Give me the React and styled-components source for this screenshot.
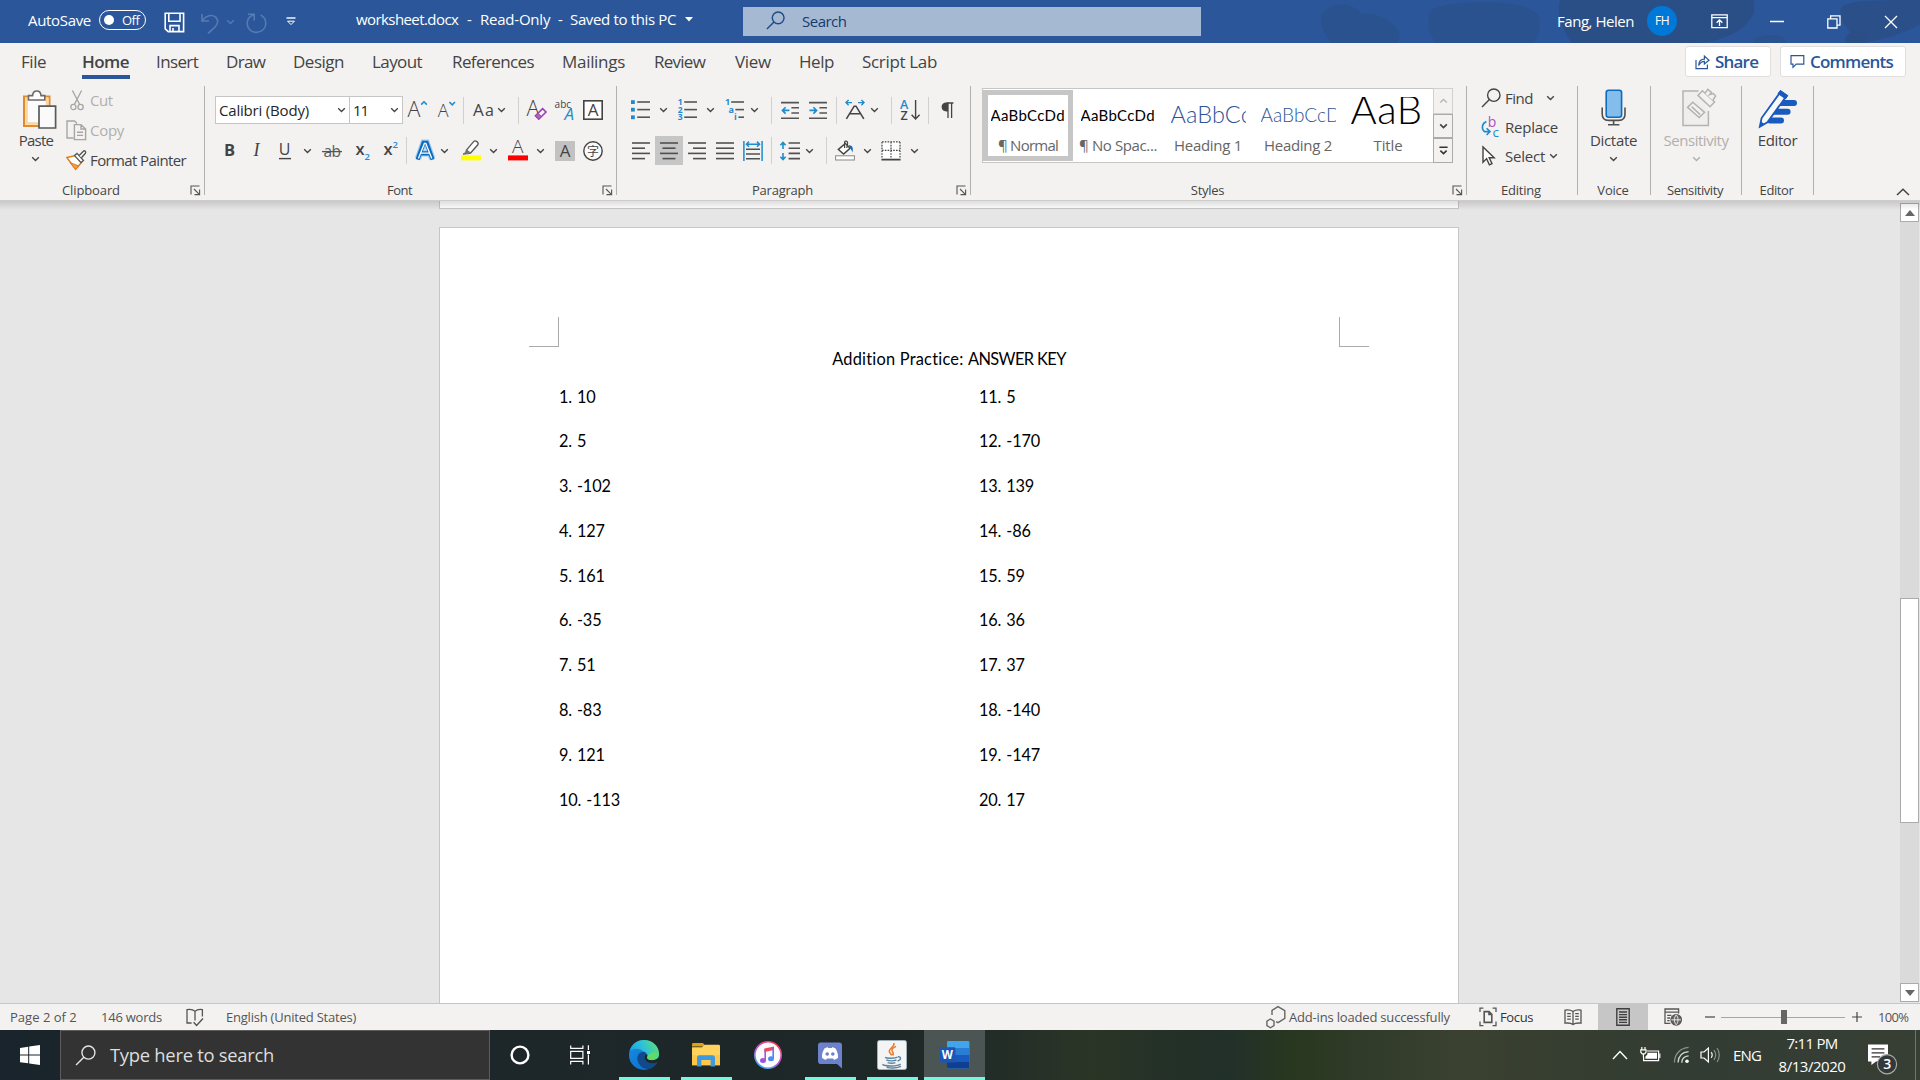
import React from 'react';
import styled, { createGlobalStyle, css } from 'styled-components';

const UI = '"Open Sans", "Noto Sans", "Noto Sans CJK SC", sans-serif';
const BODY = 'Lato, "Open Sans", sans-serif';
const INK = '#444444';
const BLUE = '#1e8bcd';

const Global = createGlobalStyle`
  * { box-sizing: border-box; }
  html, body { margin: 0; padding: 0; overflow: hidden; }
  body { font-family: ${UI}; color: ${INK}; }
  svg { display: block; flex: none; overflow: visible; }
  svg text { font-family: ${UI}; }
`;

const Window = styled.div`
  width: 1920px;
  height: 1080px;
  display: flex;
  flex-direction: column;
  background: #e6e6e6;
  overflow: hidden;
`;

const Item = styled.div`
  flex: none;
  margin-left: ${(p) => p.$ml || 0}px;
  margin-top: ${(p) => p.$mt || 0}px;
  width: ${(p) => (p.$w ? `${p.$w}px` : 'auto')};
`;

const Label = styled.span`
  flex: none;
  display: block;
  white-space: nowrap;
  width: ${(p) => (p.$w ? `${p.$w}px` : 'auto')};
  margin-left: ${(p) => p.$ml || 0}px;
  font-size: ${(p) => p.$size || 15}px;
  line-height: ${(p) => p.$lh || 20}px;
  font-weight: ${(p) => p.$weight || 400};
  letter-spacing: ${(p) => p.$ls ?? -0.35}px;
  color: ${(p) => p.$color || 'inherit'};
`;

/* ---------- title bar ---------- */

const TitleBar = styled.header`
  position: relative;
  height: 43px;
  flex: none;
  display: flex;
  align-items: center;
  background: #2b579a;
  color: #fff;
  > * { position: relative; }
`;

const Backdrop = styled.svg`
  && { position: absolute; top: 0; right: 0; overflow: hidden; }
`;

const AutoSave = styled.div`
  display: flex;
  align-items: center;
  margin: -3px 0 0 28px;
`;

const Toggle = styled.div`
  margin-left: 8px;
  width: 47px;
  height: 20px;
  border: 1.4px solid #fff;
  border-radius: 10px;
  display: flex;
  align-items: center;
  padding-left: 4px;
`;

const Knob = styled.i`
  width: 10px;
  height: 10px;
  border-radius: 50%;
  background: #fff;
`;

const SearchBox = styled.div`
  margin-left: 50px;
  width: 458px;
  height: 29px;
  background: #a6b9d3;
  display: flex;
  align-items: center;
  padding: 0 0 2px 23px;
  color: #163a6e;
`;

const TitleText = styled.div`
  display: flex;
  align-items: center;
  margin-left: 60px;
  margin-top: -5px;
`;

const UserName = styled.div`
  width: 77px;
  margin: -1px 0 0 356px;
`;

const Avatar = styled.div`
  margin-left: 13px;
  margin-top: -1px;
  width: 30px;
  height: 30px;
  border-radius: 50%;
  background: #0078d7;
  display: flex;
  align-items: center;
  justify-content: center;
`;

/* ---------- tabs ---------- */

const TabBar = styled.nav`
  height: 40px;
  flex: none;
  display: flex;
  background: #f3f2f1;
`;

const Tab = styled.div`
  flex: none;
  height: 36px;
  margin-left: ${(p) => p.$ml}px;
  width: ${(p) => p.$w}px;
  padding-top: 7px;
  border-bottom: ${(p) => (p.$active ? '4px solid #2b579a' : '0')};
`;

const ActionButton = styled.div`
  height: 31px;
  margin-top: 3px;
  margin-left: ${(p) => p.$ml}px;
  width: ${(p) => p.$w}px;
  background: #fff;
  border: 1px solid #e1dfdd;
  border-radius: 3px;
  display: flex;
  align-items: center;
  padding-left: 9px;
  color: #2b579a;
`;

/* ---------- ribbon ---------- */

const Ribbon = styled.section`
  height: 118px;
  flex: none;
  display: flex;
  background: #f3f2f1;
  border-bottom: 1px solid #cfcdcb;
`;

const GroupBox = styled.div`
  flex: none;
  width: ${(p) => p.$w}px;
  display: flex;
  flex-direction: column;
`;

const GroupBody = styled.div`
  height: 98px;
  display: flex;
  flex-direction: ${(p) => (p.$column ? 'column' : 'row')};
`;

const GroupFoot = styled.div`
  height: 18px;
  display: flex;
  align-items: center;
  padding-right: ${(p) => (p.$launcher ? 0 : 2)}px;
`;

const GroupName = styled.span`
  flex: 1;
  text-align: center;
  font-size: 13px;
  line-height: 18px;
  letter-spacing: ${(p) => p.$ls ?? -0.22}px;
`;

const Launcher = styled.div`
  width: 22px;
  padding: 1px 0 0 8px;
`;

const Divider = styled.i`
  flex: none;
  width: 1px;
  height: 109px;
  margin-top: 3px;
  background: #b3b0ad;
`;

const ToolRow = styled.div`
  height: ${(p) => p.$h || 29}px;
  margin-top: ${(p) => p.$mt}px;
  display: flex;
  align-items: center;
`;

const Rule = styled.i`
  flex: none;
  width: 1px;
  height: 27px;
  margin-left: ${(p) => p.$ml}px;
  background: #d2d0ce;
`;

const Combo = styled.div`
  flex: none;
  height: 28px;
  margin-left: ${(p) => p.$ml}px;
  width: ${(p) => p.$w}px;
  background: #fff;
  border: 1px solid #c8c6c4;
  display: flex;
  align-items: center;
  justify-content: space-between;
  padding: 0 3px;
  color: #262626;
`;

const Pressed = styled.div`
  flex: none;
  width: 28px;
  height: 29px;
  margin: 0 5px;
  background: #c6c6c6;
  display: flex;
  align-items: center;
  justify-content: center;
`;

const BigButton = styled.div`
  width: ${(p) => p.$w}px;
  display: flex;
  flex-direction: column;
  align-items: center;
  padding-top: 6px;
  color: ${(p) => (p.$off ? '#b1afad' : INK)};
`;

const BigIcon = styled.div`
  height: 41px;
  margin-left: ${(p) => p.$ml || 0}px;
`;

const CommandList = styled.div`
  padding-top: ${(p) => p.$pt}px;
  margin-left: ${(p) => p.$ml || 0}px;
`;

const Command = styled.div`
  height: ${(p) => p.$h}px;
  display: flex;
  align-items: center;
  color: ${(p) => (p.$off ? '#b1afad' : INK)};
`;

const CommandIcon = styled.div`
  width: 24px;
`;

const Gallery = styled.div`
  margin: 5px 0 0 11px;
  width: 471px;
  height: 75px;
  display: flex;
  background: #fff;
  border: 1px solid #c8c6c4;
  border-right: 0;
`;

const StyleCell = styled.div`
  flex: none;
  width: 90px;
  margin: 1px 0 1px;
  display: flex;
  flex-direction: column;
  align-items: center;
  ${(p) => p.$selected && css`box-shadow: inset 0 0 0 5px #c6c6c6;`}
`;

const Sample = styled.div`
  margin-top: 7px;
  width: 75px;
  height: 32px;
  overflow: hidden;
  white-space: nowrap;
  font-family: ${BODY};
  font-size: ${(p) => p.$size}px;
  line-height: ${(p) => p.$lh}px;
  font-weight: ${(p) => p.$weight || 400};
  letter-spacing: ${(p) => p.$ls || 0}px;
  color: ${(p) => p.$color || '#000'};
`;

const StyleName = styled.div`
  margin-top: 6px;
  font-size: 15px;
  line-height: 20px;
  letter-spacing: ${(p) => p.$ls}px;
  color: #666;
  white-space: nowrap;
`;

const GalleryArrows = styled.div`
  width: 20px;
  margin: -1px 0 -1px auto;
  display: grid;
  grid-template-rows: 26px 24px 25px;
`;

const GalleryArrow = styled.div`
  border: 1px solid ${(p) => (p.$off ? '#d2d0ce' : '#ababab')};
  background: #f3f2f1;
  display: flex;
  align-items: center;
  justify-content: center;
`;

/* ---------- document ---------- */

const Workspace = styled.main`
  position: relative;
  height: 802px;
  flex: none;
  display: flex;
  background: #e6e6e6;
  overflow: hidden;
`;

const RibbonShadow = styled.div`
  position: absolute;
  left: 0;
  right: 0;
  top: 0;
  height: 9px;
  background: linear-gradient(rgba(0, 0, 0, 0.13), rgba(0, 0, 0, 0));
`;

const Pages = styled.div`
  margin-left: 439px;
  width: 1020px;
`;

const PageEnd = styled.div`
  height: 8px;
  background: #fff;
  border: 1px solid #c6c6c6;
  border-top: 0;
`;

const Page = styled.article`
  margin-top: 18px;
  height: 900px;
  background: #fff;
  border: 1px solid #c6c6c6;
  color: #000;
  font-family: ${BODY};
`;

const CropRow = styled.div`
  display: flex;
  justify-content: space-between;
  padding: 89px 89px 0 89px;
`;

const Crop = styled.i`
  width: 30px;
  height: 30px;
  border-bottom: 1px solid #ababab;
  ${(p) => (p.$left ? 'border-right' : 'border-left')}: 1px solid #ababab;
`;

const Heading = styled.h1`
  margin: 0;
  padding-top: 2px;
  text-align: center;
  font-size: 16.4px;
  line-height: 20px;
  font-weight: 400;
  letter-spacing: 0.22px;
`;

const Caps = styled.span`
  letter-spacing: -0.6px;
`;

const Answers = styled.div`
  display: grid;
  grid-template-columns: 420px 1fr;
  grid-template-rows: repeat(10, 44.8px);
  grid-auto-flow: column;
  margin: 5.5px 0 0 119px;
`;

const Answer = styled.p`
  margin: 0;
  font-size: 16.3px;
  line-height: 44.8px;
  letter-spacing: -0.16px;
  word-spacing: 1px;
`;

const Scrollbar = styled.div`
  margin-left: auto;
  width: 20px;
  display: flex;
  flex-direction: column;
  padding: 2px 1px 1px 0;
`;

const ScrollButton = styled.div`
  height: 19px;
  flex: none;
  background: #fff;
  border: 1px solid #ababab;
  display: flex;
  align-items: center;
  justify-content: center;
`;

const ScrollTrack = styled.div`
  flex: 1;
  background: #dadada;
  padding-top: 376px;
`;

const ScrollThumb = styled.div`
  height: 225px;
  background: #fff;
  border: 1px solid #ababab;
`;

/* ---------- status bar ---------- */

const StatusBar = styled.footer`
  height: 27px;
  flex: none;
  display: flex;
  align-items: center;
  background: #f3f2f1;
  border-top: 1px solid #c6c6c6;
  color: #555;
`;

const ViewButton = styled.div`
  margin-left: 16px;
  width: 50px;
  height: 26px;
  background: #c6c6c6;
  display: flex;
  align-items: center;
  justify-content: center;
`;

const ZoomTrack = styled.div`
  margin-left: 6px;
  width: 124px;
  height: 14px;
  padding-left: 2px;
  display: flex;
  justify-content: center;
  background: linear-gradient(#a6a6a6, #a6a6a6) center / 100% 1px no-repeat;
`;

const ZoomThumb = styled.i`
  width: 6px;
  height: 14px;
  background: #666;
`;

/* ---------- taskbar ---------- */

const Taskbar = styled.div`
  height: 50px;
  flex: none;
  display: flex;
  align-items: center;
  color: #fff;
  background: linear-gradient(90deg, #19242c 0, #1d2629 500px, #1f2827 900px, #232d28 1000px, #2b3526 1090px, #233028 1180px, #22302a 1230px, #28371f 1290px, #323c2b 1380px, #3a4130 1460px, #363e31 1560px, #333c33 1700px, #373f35 1920px);
`;

const TaskSlot = styled.div`
  position: relative;
  width: ${(p) => p.$w || 62}px;
  margin-left: ${(p) => p.$ml || 0}px;
  height: 50px;
  display: flex;
  align-items: center;
  justify-content: center;
  background: ${(p) => (p.$active ? '#4b5554' : 'transparent')};
  &::after {
    content: '';
    display: ${(p) => (p.$line ? 'block' : 'none')};
    position: absolute;
    bottom: 0;
    width: ${(p) => p.$line}px;
    height: 3px;
    background: #76f7dc;
  }
`;

const TaskSearch = styled.div`
  width: 430px;
  height: 50px;
  background: #333;
  border: 1px solid #5c5c5c;
  display: flex;
  align-items: center;
  padding-left: 14px;
  color: #dedede;
`;

const Clock = styled.div`
  width: 70px;
  margin-left: 13px;
  margin-top: -2px;
  text-align: center;
  display: flex;
  flex-direction: column;
  align-items: center;
  gap: 3px;
`;

const DesktopEdge = styled.i`
  width: 1px;
  height: 50px;
  margin-left: 17px;
  background: #6f756c;
`;

/* ---------- drawings ---------- */

const Svg = ({ w, h, children, vb, ...rest }) => (
  <svg width={w} height={h} viewBox={vb || `0 0 ${w} ${h}`} fill="none" {...rest}>{children}</svg>
);

const Chevron = ({ up, color = INK, w = 9, sw = 1.4 }) => (
  <Svg w={w} h={6} vb="0 0 9 6"><path d={up ? 'M1.2 4.6 4.5 1.4 7.8 4.6' : 'M1.2 1.3 4.5 4.5 7.8 1.3'} stroke={color} strokeWidth={sw} /></Svg>
);

const Chev = ({ ml }) => <Item $ml={ml} $w={9}><Chevron /></Item>;

const Lens = ({ w = 20, color, sw = 1.5 }) => (
  <Svg w={w} h={w} vb="0 0 20 20" stroke={color} strokeWidth={sw}><circle cx="12.8" cy="7.2" r="6.2" /><path d="M8.4 11.6 1 19" /></Svg>
);

const Glyph = ({ x, y, s, c = INK, wt = 400, children, ...r }) => (
  <text x={x} y={y} fontSize={s} fill={c} fontWeight={wt} {...r}>{children}</text>
);

const Lines = ({ rows, w = 18, h = 20, color = '#505050' }) => (
  <Svg w={w} h={h} stroke={color} strokeWidth="1.6">
    {rows.map(([y, a, b], i) => <path key={i} d={`M${a} ${y}H${b}`} />)}
  </Svg>
);

const LauncherIcon = () => (
  <Svg w={11} h={11} stroke="#555" strokeWidth="1.1"><path d="M1 9.5V1H9.5M4 4 9.3 9.3M9.6 4.5V9.6H4.5" /></Svg>
);

const SaveIcon = () => (
  <Svg w={21} h={21} stroke="#fff" strokeWidth="1.6"><path d="M1.2 1.2H19.6V19.6H4.2L1.2 16.8ZM4.8 1.2V9.2H16V1.2M6 19.6V13.6H15V19.6M9 16V19.6" /></Svg>
);
const UndoIcon = () => (
  <Svg w={18} h={22} stroke="#557ab4" strokeWidth="1.6"><path d="M1 2V9H8M1.2 8.6C5 3.6 11 2 14.6 5.2 18.4 8.8 16.4 12.6 13.4 15.6L7 21.4" /></Svg>
);
const RedoIcon = () => (
  <Svg w={21} h={22} stroke="#557ab4" strokeWidth="1.6"><path d="M2 2.2H8.2V8.4M7.8 2.8C3 4.6 1 8.2 1.2 12 1.6 17 5.6 20.4 10.4 20.4 15.6 20.4 19.8 16.4 19.8 11.4 19.8 7.6 17.8 4.6 14.6 3" /></Svg>
);
const CustomizeIcon = () => (
  <Svg w={10} h={10} stroke="#fff" strokeWidth="1.4"><path d="M.5 1H9.5" /><path d="M1.6 4.2H8.4L5 7.6Z" strokeWidth="1" /></Svg>
);
const RibbonIcon = () => (
  <Svg w={17} h={15} stroke="#fff" strokeWidth="1.3"><path d="M.8 .8H16.2V13.6H.8ZM.8 3.6H16.2M8.5 12V6.2M5.6 8.8 8.5 5.9 11.4 8.8" /></Svg>
);
const RestoreIcon = () => (
  <Svg w={14} h={14} stroke="#fff" strokeWidth="1.3"><path d="M.8 3.8H10V13H.8ZM3.6 3.6V.8H13V10.2H10.2" /></Svg>
);
const CloseIcon = () => (
  <Svg w={14} h={14} stroke="#fff" strokeWidth="1.3"><path d="M1 1 13 13M13 1 1 13" /></Svg>
);
const ShareIcon = () => (
  <Svg w={15} h={16} stroke="#2b579a" strokeWidth="1.2"><path d="M1 6V14.6H12.4V10.4M3.6 11.6C3.8 7.4 6 5.2 9.4 5.2V2L14 6.2 9.4 10V7.4C7 7.4 5 8.8 3.6 11.6Z" /></Svg>
);
const CommentIcon = () => (
  <Svg w={15} h={15} stroke="#2b579a" strokeWidth="1.2"><path d="M1 1.6H13.8V10.2H6.2L3 13.4V10.2H1Z" /></Svg>
);

const PasteIcon = () => (
  <Svg w={35} h={39}>
    <path d="M2 6.5H27.5V36H2Z" fill="#fbfbfb" stroke="#e58a2a" strokeWidth="2" />
    <path d="M4.5 9H25V33.5H4.5Z" stroke="#fbd69c" strokeWidth="2.6" />
    <path d="M6.5 10V5.6H10.6C10.8 2.6 12.4 1 14.8 1 17.2 1 18.8 2.6 19 5.6H22.8V10Z" fill="#fff" stroke="#6b6b6b" strokeWidth="1.6" />
    <path d="M17 16.2H33.6V38H17Z" fill="#fafafa" stroke="#5a5a5a" strokeWidth="1.7" />
  </Svg>
);
const CutIcon = () => (
  <Svg w={14} h={21} stroke="#a7a5a3" strokeWidth="1.3"><path d="M2.4 .5 9.6 14.4M11.6 .5 4.4 14.4" /><circle cx="3.4" cy="17" r="2.6" /><circle cx="10.6" cy="17" r="2.6" /></Svg>
);
const CopyIcon = () => (
  <Svg w={21} h={21} stroke="#a7a5a3" strokeWidth="1.4"><path d="M7.6 18H1V1H8.6L11 3.4" /><path d="M8.4 4.6H15L19.6 9V19.6H8.4ZM15 4.6V9H19.6M11 12.2H17M11 15.4H17" /></Svg>
);
const PainterIcon = () => (
  <Svg w={21} h={21}>
    <path d="M1 7.6 9.4 5.6 15.4 12.4 9.6 19.4Z" fill="#fff" stroke="#e07b1b" strokeWidth="1.5" />
    <path d="M4 12.6 12.4 15.8 9.6 19.4Z" fill="#f0a050" stroke="#e07b1b" strokeWidth="1" />
    <path d="M8.6 5.6 11 3.4 17.4 10.4 15 12.6Z" fill="#fff" stroke="#555" strokeWidth="1.4" />
    <path d="M13.2 5.6 17.4 1.2C18.6 .2 20.4 1.8 19.4 3.2L15.4 7.8" fill="#fff" stroke="#555" strokeWidth="1.4" />
  </Svg>
);

const GrowIcon = () => (<Svg w={20} h={24}><Glyph x="-.4" y="19" s="21.5" wt={350}>A</Glyph><path d="M13.2 6.6 16 3.8 18.8 6.6" stroke={BLUE} strokeWidth="1.6" /></Svg>);
const ShrinkIcon = () => (<Svg w={18} h={24}><Glyph x="-.2" y="19" s="18" wt={350}>A</Glyph><path d="M11.4 4 14.2 6.8 17 4" stroke={BLUE} strokeWidth="1.6" /></Svg>);
const CaseIcon = () => (<Svg w={22} h={24}><Glyph x="0" y="18" s="17" wt={400}>A</Glyph><Glyph x="12" y="18" s="16" wt={400}>a</Glyph></Svg>);
const ClearIcon = () => (
  <Svg w={20} h={22}><Glyph x="-.4" y="17" s="21.5" wt={350}>A</Glyph><path d="M8.4 16.8 15.6 9.6 19 13 11.8 20.2Z" fill="#f7ecfa" stroke="#9a3fae" strokeWidth="1.6" /><path d="M8.4 16.8 11 14.2 14.4 17.6 11.8 20.2Z" fill="#b45fc4" stroke="#9a3fae" /></Svg>
);
const PhoneticIcon = () => (<Svg w={21} h={24}><Glyph x="-.4" y="10" s="10">abc</Glyph><Glyph x="9.6" y="21.6" s="17" c={BLUE} fontStyle="italic">A</Glyph></Svg>);
const BoxedA = () => (<Svg w={20} h={20}><rect x=".8" y=".8" width="18.4" height="18.4" fill="#fff" stroke="#444" strokeWidth="1.6" /><Glyph x="4.8" y="16" s="17">A</Glyph></Svg>);
const StrikeIcon = () => (<Svg w={20} h={20}><Glyph x="1.4" y="15.6" s="15.5" c="#5c5c5c" letterSpacing="-.4">ab</Glyph><path d="M0 10.6H20" stroke="#555" strokeWidth="1.3" /></Svg>);
const SubIcon = () => (<Svg w={15} h={24}><Glyph x="-.4" y="16" s="16.5" wt={600}>x</Glyph><Glyph x="8.6" y="21.4" s="9.5" wt={600} c={BLUE}>2</Glyph></Svg>);
const SupIcon = () => (<Svg w={15} h={24}><Glyph x="-.4" y="16" s="16.5" wt={600}>x</Glyph><Glyph x="8.6" y="8.6" s="9.5" wt={600} c={BLUE}>2</Glyph></Svg>);
const EffectsIcon = () => (
  <Svg w={20} h={22} strokeLinejoin="miter">
    <path d="M3 18.6 8.6 2.8H11.6L17.2 18.6M6 13.4H14.2" stroke="#9ccbf0" strokeWidth="6.4" />
    <path d="M2.6 19.6 8.6 2.8H11.6L17.6 19.6M6 13.4H14.2" stroke="#0f6cbd" strokeWidth="4.2" />
    <path d="M3.4 18.4 9.4 3.4H10.8L16.8 18.4M6 13.2H14.2" stroke="#fff" strokeWidth="1.3" />
  </Svg>
);
const HighlightIcon = () => (
  <Svg w={20} h={21}><path d="M5.2 10.4 12.6 1.6C14.4 -.2 18.2 2.4 16.8 4.8L9.6 13" fill="#fff" stroke="#555" strokeWidth="1.3" /><path d="M5.4 9.8 10 13.2 6.6 13.8 2 14.2 4.6 12.4Z" fill="#777" stroke="#666" /><path d="M0 15.4H20V20.4H0Z" fill="#ffff00" /></Svg>
);
const FontColorIcon = () => (<Svg w={20} h={21}><Glyph x="4" y="13" s="19" wt={350}>A</Glyph><path d="M0 15.4H20V20.4H0Z" fill="#ff0000" /></Svg>);
const ShadeIcon = () => (<Svg w={20} h={20}><path d="M0 0H20V20H0Z" fill="#c2c2c2" /><Glyph x="4.8" y="16" s="17">A</Glyph></Svg>);
const EncloseIcon = () => (
  <Svg w={20} h={20}><circle cx="10" cy="10" r="9.2" fill="#fafafa" stroke="#444" strokeWidth="1.4" /><text x="4" y="14.6" fontSize="12" fill="#444" style={{ fontFamily: '"Noto Sans CJK SC", sans-serif' }}>字</text></Svg>
);

const BulletsIcon = () => (
  <Svg w={19} h={20}>{[2, 9.6, 17.2].map((y) => <g key={y}><rect x="0" y={y - 1.8} width="3.8" height="3.8" fill={BLUE} /><path d={`M6.2 ${y}H19`} stroke="#555" strokeWidth="1.6" /></g>)}</Svg>
);
const NumbersIcon = () => (
  <Svg w={19} h={22}>{[[3, '1'], [10.6, '2'], [18.2, '3']].map(([y, n]) => <g key={n}><Glyph x="-.2" y={y + 3} s="8.5" wt={700} c={BLUE}>{n}</Glyph><path d={`M6.2 ${y}H19`} stroke="#555" strokeWidth="1.6" /></g>)}</Svg>
);
const MultiIcon = () => (
  <Svg w={19} h={22}>{[[3, '1', 0, 6.2], [10.6, 'a', 3.4, 10.4], [18.2, 'i', 9, 13.4]].map(([y, n, x, from]) => <g key={n}><Glyph x={x} y={y + 3} s="9" wt={700} c={BLUE}>{n}</Glyph><path d={`M${from} ${y}H19`} stroke="#555" strokeWidth="1.6" /></g>)}</Svg>
);
const IndentIcon = ({ out }) => (
  <Svg w={18} h={19} strokeWidth="1.6"><path d="M0 1.6H18M10.4 6.8H18M10.4 12H18M0 17.2H18" stroke="#555" /><path d={out ? 'M8.4 9.4H1.6M4.6 6.2 1.4 9.4 4.6 12.6' : 'M.4 9.4H7.2M4.4 6.2 7.6 9.4 4.4 12.6'} stroke={BLUE} /></Svg>
);
const AsianIcon = () => (
  <Svg w={20} h={22}><path d="M7 3.6H1M3.6 1 1 3.6 3.6 6.2M13 3.6H19M16.4 1 19 3.6 16.4 6.2" stroke={BLUE} strokeWidth="1.4" /><path d="M1.4 19.8 9.2 7.2H11L18.8 19.8M4.6 14.8H15.6" stroke="#444" strokeWidth="1.6" /></Svg>
);
const SortIcon = () => (
  <Svg w={20} h={22}><Glyph x="0" y="10" s="12.5" wt={600} c={BLUE}>A</Glyph><Glyph x=".4" y="21" s="12.5" wt={600}>Z</Glyph><path d="M15.6 1V20M11.6 15.8 15.6 20 19.6 15.8" stroke="#444" strokeWidth="1.4" /></Svg>
);
const PilcrowIcon = () => (
  <Svg w={13} h={17}><path d="M5.6 1H12.4M7 1V16M10.6 1V16" stroke="#444" strokeWidth="1.3" /><path d="M7 .6V9.4H5.4C2.4 9.4 .6 7.6 .6 5 .6 2.4 2.4 .6 5.4 .6Z" fill="#444" /></Svg>
);
const DistributeIcon = () => (
  <Svg w={20} h={20}><path d="M.9 0V20M19.1 0V20M3.6 3.2H16.4M6 .6 3.4 3.2 6 5.8M14 .6 16.6 3.2 14 5.8" stroke={BLUE} strokeWidth="1.5" /><path d="M3 8.2H17M3 13H17M3 17.8H17" stroke="#505050" strokeWidth="1.6" /></Svg>
);
const SpacingIcon = () => (
  <Svg w={20} h={20}><path d="M3 1.6V8M.4 4.2 3 1.4 5.6 4.2M3 12V18.4M.4 15.8 3 18.6 5.6 15.8" stroke={BLUE} strokeWidth="1.6" /><path d="M8.6 2H20M8.6 7.2H20M8.6 12.4H20M8.6 17.6H20" stroke="#505050" strokeWidth="1.6" /></Svg>
);
const BucketIcon = () => (
  <Svg w={20} h={21}><path d="M3.4 9.4 10.4 3.4 15 8.4 8.6 14Z" fill="#fff" stroke="#444" strokeWidth="1.4" /><path d="M9.6 8V2.4C9.6 .4 13 .6 12.6 3.4L11.8 8" stroke="#444" strokeWidth="1.2" /><path d="M13.4 5.4C17.6 5 18.4 8 17.6 12.4L15.6 8.6Z" fill="#0f6cbd" /><rect x=".6" y="15.8" width="18.8" height="4.2" fill="#fff" stroke="#888" /></Svg>
);
const BordersIcon = () => (
  <Svg w={20} h={20}><path d="M1 .8H19V18H1Z" fill="#fff" /><path d="M1 .8H19M1 9.4H19M1 1V17.6M10 1V17.6M19 1V17.6" stroke="#444" strokeWidth="1.2" strokeDasharray="1.6 1.2" /><path d="M.4 18.6H19.6" stroke="#444" strokeWidth="1.8" /></Svg>
);

const ReplaceIcon = () => (
  <Svg w={19} h={22}><Glyph x="6.8" y="10.6" s="14" c="#b04fc0">b</Glyph><Glyph x="11.6" y="20.6" s="13.5" c={BLUE}>c</Glyph><path d="M5.4 5.6C1 7.6 0 12.4 3.4 15.6H8.6M5.6 12.2 9 15.6 5.6 19" stroke={BLUE} strokeWidth="1.6" /></Svg>
);
const PointerIcon = () => (
  <Svg w={15} h={20}><path d="M2 1V16.2L5.6 12.6 8.4 18.8 11 17.6 8.2 11.8H13.2Z" fill="#fff" stroke="#444" strokeWidth="1.4" /></Svg>
);
const MicIcon = () => (
  <Svg w={25} h={37}><rect x="5.2" y="1.2" width="15.4" height="27" rx="2.4" fill="#83bdeb" stroke="#0f6cbd" strokeWidth="1.6" /><path d="M1.2 18.6V25C1.2 29.6 3.6 31.4 7.4 31.4H17.8C21.6 31.4 24 29.6 24 25V18.6M12.6 31.4V35.6M7 35.8H18.4" stroke="#505050" strokeWidth="1.6" /></Svg>
);
const SensitivityIcon = () => (
  <Svg w={36} h={39} stroke="#b5b3b1" strokeWidth="1.5"><path d="M17.6 2H2V36.6H27.4V22" fill="#efeeed" /><path d="M6.6 18.4 11.8 13.2 23.6 23.4 18.2 28.6ZM10.6 17.6 19.2 25.6" fill="#f3f2f1" /><path d="M17 6.4 21.4 1.8 33.6 13 29 17.8Z" fill="#f3f2f1" /><path d="M24 4.2 26.8 .4 30.4 3.4 28.6 5.6 32.4 4.6 34.6 7 31.8 11.4" fill="#f3f2f1" /></Svg>
);
const EditorIcon = () => (
  <Svg w={40} h={40}>
    <path d="M22 14H36M16 22.8H29.6M12 31.4H23" stroke="#185abd" strokeWidth="6" strokeLinecap="round" />
    <path d="M22.6 2.8 28.4 7 9.4 33.4 1.8 37.8 3.6 29Z" fill="#f8f8f8" stroke="#185abd" strokeWidth="1.8" />
    <path d="M22.4 1.4 29.8 6.6 27.6 9.8 20 4.6Z" fill="#185abd" stroke="#185abd" strokeLinejoin="round" />
    <path d="M1.4 38.4 3 32.4 6.8 35.2Z" fill="#185abd" />
  </Svg>
);

const ProofIcon = () => (
  <Svg w={18} h={19} stroke="#555" strokeWidth="1.3"><path d="M9 3.4C7 1.4 3.6 1.2 1 1.6V15H5.6M9 3.4C11 1.4 14 1.2 16.4 1.6V8.6M9 3.4V12.6" /><path d="M7.6 14.2 10.6 17.4 17 10.6" strokeWidth="1.5" /></Svg>
);
const AddinIcon = () => (
  <Svg w={20} h={24} stroke="#666" strokeWidth="1.4"><path d="M6 10V5.4L12 1.6 18.8 5.6V13.4L12 17.6 10 16.6" /><path d="M4.4 14 8 16.2V20.6L4.4 22.8 .9 20.6V16.2Z" /></Svg>
);
const FocusIcon = () => (
  <Svg w={18} h={20} stroke="#555" strokeWidth="1.3"><path d="M4.4 1.2H1V5M1 14.6V18.6H4.4M13.6 1.2H17V5M17 14.6V18.6H13.6" /><path d="M5.2 4.6H10L12.8 7.4V15.4H5.2ZM10 4.6V7.4H12.8" strokeWidth="1.6" /></Svg>
);
const ReadIcon = () => (
  <Svg w={18} h={17} stroke="#555" strokeWidth="1.3"><path d="M9 2.6C6.6 .8 3.4 .8 1 1.2V14.2C3.6 13.8 6.6 13.8 9 15.6 11.4 13.8 14.4 13.8 17 14.2V1.2C14.6 .8 11.4 .8 9 2.6ZM9 2.6V15.6M3.2 4.6H6.8M3.2 7.4H6.8M3.2 10.2H6.8M11.2 4.6H14.8M11.2 7.4H14.8M11.2 10.2H14.8" /></Svg>
);
const PrintIcon = () => (
  <Svg w={14} h={18} stroke="#3f3f3f" strokeWidth="1.4"><path d="M.8 .8H13.2V17.2H.8ZM3 4H11M3 6.6H11M3 9.2H11M3 11.8H11M3 14.4H11" /></Svg>
);
const WebIcon = () => (
  <Svg w={18} h={18} stroke="#555" strokeWidth="1.3"><path d="M6.4 15.4H1V1H14.6V5.6M1 4.2H14.6M3.2 7.4H7.4M3.2 10H6M3.2 12.6H5.6" /><circle cx="12.2" cy="11.8" r="5.2" fill="#666" /><path d="M12.2 6.8C9.8 9.6 9.8 14 12.2 16.8 14.6 14 14.6 9.6 12.2 6.8ZM7.4 11.8H17" stroke="#f3f2f1" strokeWidth=".9" /></Svg>
);

const WindowsIcon = () => (
  <Svg w={20} h={20}><path fill="#fff" d="M0 2.9 8.2 1.8V9.5H0ZM9.2 1.6 20 0V9.5H9.2ZM0 10.5H8.2V18.3L0 17.2ZM9.2 10.5H20V20L9.2 18.4Z" /></Svg>
);
const TaskViewIcon = () => (
  <Svg w={20} h={20} stroke="#fff" strokeWidth="1.2"><path d="M.7 .4V3.4H12.9V.4M.7 6.4H12.9V13.4H.7ZM.7 19.4V16.4H12.9V19.4M18.4 .2V5M18.4 9.4V19.6" /><rect x="17" y="6" width="3" height="3" fill="#fff" stroke="none" /></Svg>
);
const EdgeIcon = () => (
  <Svg w={30} h={30}>
    <defs>
      <linearGradient id="eg1" x1="0" y1=".6" x2="1" y2=".2"><stop offset="0" stopColor="#1a9fe6" /><stop offset=".5" stopColor="#2fc1d8" /><stop offset="1" stopColor="#5fe36a" /></linearGradient>
      <linearGradient id="eg2" x1="0" y1="0" x2=".7" y2="1"><stop offset="0" stopColor="#1b8ee0" /><stop offset="1" stopColor="#0a6fd0" /></linearGradient>
    </defs>
    <circle cx="15" cy="15" r="15" fill="url(#eg2)" />
    <path d="M.6 11C2.4 4.4 8.2 0 15 0 23.4 0 30 6.2 30 13.4 30 17.6 26.6 20 23 20 20 20 17.8 19 18 17.8 19.2 16.6 18.6 13.4 15.8 12.2 10 7 3.4 8.4 .6 11Z" fill="url(#eg1)" />
    <path d="M16 12C9.4 11 7.6 16.4 8.6 20.6 9.8 25.4 14.4 30 20 29 23.6 27.8 26.6 25.2 28 22.4 24 24.6 16.4 23.4 15.6 18 15.2 15.4 16.6 14 18 14.8Z" fill="#114a8b" />
    <path d="M18.2 14.6C19.4 17 17.4 17.6 18.6 19 20.4 20.8 26 20.6 30.2 17.6L30.4 21 28 22.4C24 24.6 16.4 23.4 15.6 18 15.2 15.4 16.6 14 18.2 14.6Z" fill="#1e2828" />
    <path d="M18 17.4C18 19 20.6 20 23 20 26.6 20 30 17.6 30 13.4L24 12 18.8 15Z" fill="#5fdc68" />
  </Svg>
);
const FolderIcon = () => (
  <Svg w={28} h={24}><path d="M0 1.4C0 .6.6 0 1.4 0H11L13.6 3.6H0Z" fill="#dfa110" /><path d="M0 4.2H10L12.6 1.8H26.6C27.4 1.8 28 2.4 28 3.2V22H0Z" fill="#ffd35c" /><path d="M0 12H28V22.4H0Z" fill="#fdc84a" /><path d="M5 23.6V14.6C5 13.2 6 12.2 7.4 12.2H20.6C22 12.2 23 13.2 23 14.6V23.6H18.6V17H9.4V23.6Z" fill="#3d9ae0" /></Svg>
);
const MusicIcon = () => (
  <Svg w={28} h={28}>
    <defs><linearGradient id="mu1" x1=".8" y1="0" x2=".2" y2="1"><stop offset="0" stopColor="#fb3f54" /><stop offset=".5" stopColor="#c04fd0" /><stop offset="1" stopColor="#35b4f0" /></linearGradient><linearGradient id="mu2" x1="1" y1="0" x2="0" y2="1"><stop offset="0" stopColor="#c04fc0" /><stop offset="1" stopColor="#7a5cf0" /></linearGradient></defs>
    <circle cx="14" cy="14" r="13.2" fill="#fbfafd" stroke="url(#mu1)" strokeWidth="1.6" />
    <path d="M10.4 7.4 20 5.4V9L10.4 11Z" fill="#f24a5c" /><path d="M11.2 8V19.4" stroke="#b052c8" strokeWidth="1.6" /><path d="M19.2 7V17.6" stroke="#5a7bec" strokeWidth="1.6" /><ellipse cx="9" cy="19.6" rx="3" ry="2.5" fill="url(#mu2)" /><ellipse cx="17" cy="17.8" rx="3" ry="2.5" fill="#4f8cf0" />
  </Svg>
);
const DiscordIcon = () => (
  <Svg w={24} h={27}><path d="M2.6 .6H21.4C22.8 .6 24 1.8 24 3.2V26.4L19 22H2.6C1.2 22 0 20.8 0 19.4V3.2C0 1.8 1.2 .6 2.6 .6Z" fill="#6d82cc" /><path d="M6.4 6.6C8 5.4 9.4 5.2 9.8 5.2L10.2 6H13.8L14.2 5.2C14.6 5.2 16 5.4 17.6 6.6 19.6 10 20.2 13 20 15.8 18.4 17.4 16.6 17.8 16 17.8L15 16.4H9L8 17.8C7.4 17.8 5.6 17.4 4 15.8 3.8 13 4.4 10 6.4 6.6Z" fill="#fff" /><circle cx="9.2" cy="12" r="1.8" fill="#6d82cc" /><circle cx="14.8" cy="12" r="1.8" fill="#6d82cc" /></Svg>
);
const JavaIcon = () => (
  <Svg w={30} h={30}>
    <rect x=".5" y=".5" width="29" height="29" rx="2" fill="#f4f4f4" stroke="#9fb0b8" />
    <path d="M16.8 3C18.4 7 11 8.4 12.4 12 13 13.6 14.4 14.4 14.8 15.4M19 6.4C15.6 8 13.8 9.6 15.6 12 16.6 13.4 16.6 14.4 15.6 15.4" stroke="#ea7a2c" strokeWidth="1.5" />
    <path d="M8 17.4C10 18.6 18 18.4 20.6 17.2M9.4 20C12 21 17 21 19.4 20M10.6 22.6C13 23.4 16.4 23.4 18.4 22.6M21 16.8C24.4 16.2 24.4 20 20.6 21M5.4 24.4C8 26.6 21 26.6 23.6 24M9.6 27.4C14 28.2 20 28 24 26.4" stroke="#5b84a0" strokeWidth="1.4" />
  </Svg>
);
const WordIcon = () => (
  <Svg w={30} h={28}><rect x="7" y="0" width="22.4" height="27.4" rx="1.4" fill="#41a5ee" /><path d="M7 7H29.4V14H7Z" fill="#2b7cd3" /><path d="M7 14H29.4V21H7Z" fill="#185abd" /><path d="M7 21H29.4V26C29.4 26.8 28.8 27.4 28 27.4H8.4C7.6 27.4 7 26.8 7 26Z" fill="#103f91" /><rect x="0" y="6.2" width="15.4" height="15.4" rx="1.2" fill="#1a56b4" /><Glyph x="1.8" y="18" s="11.5" wt={700} c="#fff">W</Glyph></Svg>
);

const BatteryIcon = () => (
  <Svg w={21} h={18} stroke="#fff" strokeWidth="1.2"><path d="M7 5H18.6V14.6H3.6V11" /><path d="M7.4 6.8H17V12.8H5.4V10.6L7.4 8.6Z" fill="#fff" stroke="none" /><path d="M19.8 7.6V12M1.8 1V3.6M5 1V3.6M.8 3.8H6V6.2L4.6 7.8H2.2L.8 6.2ZM3.4 7.8V11" /></Svg>
);
const WifiIcon = () => (
  <Svg w={17} h={18} strokeWidth="1.3"><path d="M1.4 16.4C1.6 8 7.4 2 15.6 1.4" stroke="#8c9189" /><path d="M5 16.6C5.2 10.4 9 6.2 15.6 5.6M8.8 16.8C8.8 12.8 11.4 10.2 15.6 9.8" stroke="#d5d7d3" /><circle cx="14" cy="15.2" r="1.8" fill="#fff" /></Svg>
);
const VolumeIcon = () => (
  <Svg w={21} h={18} strokeWidth="1.2"><path d="M1 6H4L8.4 2V16L4 12H1Z" stroke="#fff" /><path d="M11.2 6.2C12.4 7.8 12.4 10.2 11.2 11.8" stroke="#e6e6e6" /><path d="M14 4.2C16 7 16 11 14 13.8M17 2C20 6 20 12 17 16" stroke="#8c9189" /></Svg>
);
const NoticeIcon = () => (
  <Svg w={30} h={42}><path d="M0 10.6H20V27.4H8L3.4 31V27.4H0Z" fill="#fff" /><path d="M3.6 14.8H16.4M3.6 18.8H16.4M3.6 22.8H12" stroke="#333" strokeWidth="1.2" /><circle cx="19" cy="30.2" r="9.6" fill="#33383a" stroke="#a9aaa6" strokeWidth="1.2" /><Glyph x="15.2" y="35.2" s="14" wt={600} c="#fff">3</Glyph></Svg>
);

/* ---------- sections ---------- */

const tabs = [
  ['File', 21, 27, -0.45], ['Home', 34, 48, -0.54], ['Insert', 26, 42, -0.62], ['Draw', 28, 40, -0.7], ['Design', 27, 51, -0.49],
  ['Layout', 28, 51, -0.59], ['References', 29, 82, -0.6], ['Mailings', 28, 63, -0.3], ['Review', 29, 53, -0.74],
  ['View', 28, 37, -0.29], ['Help', 27, 36, -0.44], ['Script Lab', 27, 76, -0.33],
];

const Group = ({ w, name, launcher, column, ls, children }) => (
  <>
    <GroupBox $w={w}>
      <GroupBody $column={column}>{children}</GroupBody>
      <GroupFoot $launcher={launcher}>
        <GroupName $ls={ls}>{name}</GroupName>
        {launcher && <Launcher><LauncherIcon /></Launcher>}
      </GroupFoot>
    </GroupBox>
    <Divider />
  </>
);

const samples = [
  { name: '¶ Normal', ls: -0.75, text: 'AaBbCcDd', size: 15, lh: 36.4, sl: 0.3, selected: true },
  { name: '¶ No Spac...', ls: -0.39, text: 'AaBbCcDd', size: 15, lh: 36.4, sl: 0.3 },
  { name: 'Heading 1', ls: -0.29, text: 'AaBbCc', size: 23.5, lh: 35.8, weight: 300, color: '#2f5496', sl: 0.1 },
  { name: 'Heading 2', ls: -0.29, text: 'AaBbCcD', size: 19, lh: 35.3, weight: 300, color: '#2f5496', sl: 0.05 },
  { name: 'Title', ls: -0.12, text: 'AaB', size: 40, lh: 24.6, weight: 300, sl: 0.5 },
];

const answers = ['10', '5', '-102', '127', '161', '-35', '51', '-83', '121', '-113', '5', '-170', '139', '-86', '59', '36', '37', '-140', '-147', '17'];

export default function App() {
  return (
    <Window>
      <Global />
      <TitleBar>
        <Backdrop width="720" height="43" viewBox="1200 0 720 43">
          <g fill="#2a4f87">
            <path d="M1322 14C1334 0 1352 2 1362 14 1376 12 1394 20 1400 34L1398 43H1332C1326 36 1318 26 1322 14Z" opacity=".55" />
            <path d="M1430 12C1436 0 1530 -4 1538 16 1542 28 1538 36 1534 43H1436C1430 36 1426 24 1430 12Z" opacity=".6" />
            <path d="M1560 0H1754V12C1750 26 1730 40 1700 43H1572C1562 30 1556 14 1560 0Z" />
            <path d="M1842 6C1860 -2 1880 2 1890 0H1920V24C1900 36 1880 40 1862 43 1846 30 1836 16 1842 6Z" opacity=".9" />
            <ellipse cx="1856" cy="40" rx="11" ry="9" />
            <ellipse cx="1770" cy="41" rx="16" ry="6" opacity=".6" />
          </g>
        </Backdrop>
        <AutoSave>
          <Label $w={63} $ls={-0.32}>AutoSave</Label>
          <Toggle><Knob /><Label $ml={8} $size={13} $lh={16} $ls={-0.55}>Off</Label></Toggle>
        </AutoSave>
        <Item $ml={18} $mt={2}><SaveIcon /></Item>
        <Item $ml={16} $mt={2}><UndoIcon /></Item>
        <Item $ml={7}><Chevron color="#557ab4" /></Item>
        <Item $ml={11} $mt={2}><RedoIcon /></Item>
        <Item $ml={19} $mt={1}><CustomizeIcon /></Item>
        <TitleText>
          <Label $w={111} $ls={-0.58}>worksheet.docx</Label>
          <Label $w={13}>-</Label>
          <Label $w={78} $ls={-0.22}>Read-Only</Label>
          <Label $w={12}>-</Label>
          <Label $w={115} $ls={-0.35}>Saved to this PC</Label>
          <Svg w={8} h={5}><path d="M0 0H8L4 4.6Z" fill="#fff" /></Svg>
        </TitleText>
        <SearchBox>
          <Lens w={19} color="#1f4a86" />
          <Label $ml={17} $ls={-0.5}>Search</Label>
        </SearchBox>
        <UserName><Label $ls={-0.46}>Fang, Helen</Label></UserName>
        <Avatar><Label $size={12} $ls={-0.4}>FH</Label></Avatar>
        <Item $ml={34}><RibbonIcon /></Item>
        <Item $ml={42}><Svg w={14} h={3}><path d="M0 1.5H14" stroke="#fff" strokeWidth="1.5" /></Svg></Item>
        <Item $ml={43}><RestoreIcon /></Item>
        <Item $ml={43}><CloseIcon /></Item>
      </TitleBar>

      <TabBar>
        {tabs.map(([name, ml, w, ls]) => (
          <Tab key={name} $ml={ml} $w={w} $active={name === 'Home'}>
            <Label $size={17} $lh={24} $ls={ls} $weight={name === 'Home' ? 600 : 400}>{name}</Label>
          </Tab>
        ))}
        <ActionButton $ml={747} $w={86}><ShareIcon /><Label $ml={5} $size={17} $weight={600} $ls={-0.8}>Share</Label></ActionButton>
        <ActionButton $ml={9} $w={126}><CommentIcon /><Label $ml={5} $size={17} $weight={600} $ls={-0.77}>Comments</Label></ActionButton>
      </TabBar>

      <Ribbon>
        <Group w={204} name="Clipboard" launcher ls={-0.12}>
          <BigButton $w={66}>
            <BigIcon $ml={12}><Item $mt={1}><PasteIcon /></Item></BigIcon>
            <Label $ml={6} $ls={-0.8}>Paste</Label>
            <Item $ml={5} $mt={6}><Chevron /></Item>
          </BigButton>
          <CommandList $pt={2}>
            <Command $h={30} $off><CommandIcon><Item $ml={4}><CutIcon /></Item></CommandIcon><Label $ls={-0.5}>Cut</Label></Command>
            <Command $h={30} $off><CommandIcon><CopyIcon /></CommandIcon><Label $ls={-0.28}>Copy</Label></Command>
            <Command $h={30}><CommandIcon><PainterIcon /></CommandIcon><Label $ls={-0.61}>Format Painter</Label></Command>
          </CommandList>
        </Group>

        <Group w={411} name="Font" launcher column ls={-0.5}>
          <ToolRow $mt={13} $h={28}>
            <Combo $ml={10} $w={135}><Label $ls={-0.19}>Calibri (Body)</Label><Chevron /></Combo>
            <Combo $ml={-1} $w={54}><Label $ls={-1.2}>11</Label><Chevron /></Combo>
            <Item $ml={5} $w={20}><GrowIcon /></Item>
            <Item $ml={10} $w={18}><ShrinkIcon /></Item>
            <Rule $ml={7} />
            <Item $ml={9} $w={21}><CaseIcon /></Item>
            <Chev ml={3} />
            <Rule $ml={12} />
            <Item $ml={8} $w={20}><ClearIcon /></Item>
            <Item $ml={8} $w={20}><PhoneticIcon /></Item>
            <Item $ml={8} $w={20}><BoxedA /></Item>
          </ToolRow>
          <ToolRow $mt={12}>
            <Item $ml={19} $w={11}><Svg w={12} h={20}><Glyph x="0" y="15" s="16.5" wt={700}>B</Glyph></Svg></Item>
            <Item $ml={16} $w={12}><Svg w={12} h={20}><text x="2.6" y="15" fontSize="18" fontStyle="italic" fill="#444" style={{ fontFamily: '"Liberation Serif", serif' }}>I</text></Svg></Item>
            <Item $ml={16} $w={12}><Svg w={12} h={22}><Glyph x="-.2" y="15" s="16">U</Glyph><path d="M0 18.6H12" stroke="#444" strokeWidth="1.4" /></Svg></Item>
            <Chev ml={12} />
            <Item $ml={10} $w={20}><StrikeIcon /></Item>
            <Item $ml={14} $w={14}><SubIcon /></Item>
            <Item $ml={14} $w={14}><SupIcon /></Item>
            <Rule $ml={8} />
            <Item $ml={8} $w={20}><EffectsIcon /></Item>
            <Chev ml={5} />
            <Item $ml={12} $w={20}><HighlightIcon /></Item>
            <Chev ml={8} />
            <Item $ml={10} $w={20}><FontColorIcon /></Item>
            <Chev ml={8} />
            <Item $ml={10} $w={20}><ShadeIcon /></Item>
            <Item $ml={8} $w={20}><EncloseIcon /></Item>
          </ToolRow>
        </Group>

        <Group w={353} name="Paragraph" launcher column>
          <ToolRow $mt={13} $h={28}>
            <Item $ml={14} $w={19}><BulletsIcon /></Item>
            <Chev ml={9} />
            <Item $ml={10} $w={19}><NumbersIcon /></Item>
            <Chev ml={9} />
            <Item $ml={10} $w={19}><MultiIcon /></Item>
            <Chev ml={6} />
            <Rule $ml={12} />
            <Item $ml={9} $w={18}><IndentIcon out /></Item>
            <Item $ml={10} $w={18}><IndentIcon /></Item>
            <Rule $ml={9} />
            <Item $ml={8} $w={20}><AsianIcon /></Item>
            <Chev ml={5} />
            <Rule $ml={12} />
            <Item $ml={8} $w={20}><SortIcon /></Item>
            <Rule $ml={8} />
            <Item $ml={12} $w={13}><PilcrowIcon /></Item>
          </ToolRow>
          <ToolRow $mt={12}>
            <Item $ml={15} $w={18}><Lines rows={[[2, 0, 18], [7.2, 0, 13], [12.4, 0, 18], [17.6, 0, 13]]} /></Item>
            <Pressed><Lines rows={[[2, 0, 18], [7.2, 2.5, 15.5], [12.4, 0, 18], [17.6, 2.5, 15.5]]} /></Pressed>
            <Item $w={18}><Lines rows={[[2, 0, 18], [7.2, 5, 18], [12.4, 0, 18], [17.6, 5, 18]]} /></Item>
            <Item $ml={10} $w={18}><Lines rows={[[2, 0, 18], [7.2, 0, 18], [12.4, 0, 18], [17.6, 0, 18]]} /></Item>
            <Item $ml={9} $w={20}><DistributeIcon /></Item>
            <Rule $ml={8} />
            <Item $ml={8} $w={20}><SpacingIcon /></Item>
            <Chev ml={5} />
            <Rule $ml={12} />
            <Item $ml={8} $w={20}><BucketIcon /></Item>
            <Chev ml={8} />
            <Item $ml={9} $w={20}><BordersIcon /></Item>
            <Chev ml={9} />
          </ToolRow>
        </Group>

        <Group w={495} name="Styles" launcher ls={-0.3}>
          <Gallery>
            {samples.map((s) => (
              <StyleCell key={s.name} $selected={s.selected}>
                <Sample $size={s.size} $lh={s.lh} $weight={s.weight} $color={s.color} $ls={s.sl}>{s.text}</Sample>
                <StyleName $ls={s.ls}>{s.name}</StyleName>
              </StyleCell>
            ))}
            <GalleryArrows>
              <GalleryArrow $off><Chevron up color="#b8b6b4" /></GalleryArrow>
              <GalleryArrow><Chevron sw={1.7} /></GalleryArrow>
              <GalleryArrow><Svg w={9} h={10}><path d="M.4 1.2H8.6M1.4 4.6 4.5 7.6 7.6 4.6" stroke="#333" strokeWidth="1.5" /></Svg></GalleryArrow>
            </GalleryArrows>
          </Gallery>
        </Group>

        <Group w={110} name="Editing">
          <CommandList $pt={0} $ml={14}>
            <Command $h={29}><CommandIcon><Lens w={20} color="#444" sw={1.4} /></CommandIcon><Label $ls={-0.5} $w={41}>Find</Label><Chevron /></Command>
            <Command $h={29}><CommandIcon><ReplaceIcon /></CommandIcon><Label $ls={-0.23}>Replace</Label></Command>
            <Command $h={29}><CommandIcon><PointerIcon /></CommandIcon><Label $ls={-0.23} $w={44}>Select</Label><Chevron /></Command>
          </CommandList>
        </Group>

        <Group w={72} name="Voice">
          <BigButton $w={71}><BigIcon><MicIcon /></BigIcon><Label $ls={-0.33}>Dictate</Label><Item $mt={6}><Chevron /></Item></BigButton>
        </Group>
        <Group w={90} name="Sensitivity" ls={-0.43}>
          <BigButton $w={90} $off><BigIcon $ml={6}><SensitivityIcon /></BigIcon><Label $ls={-0.46}>Sensitivity</Label><Item $mt={6}><Chevron color="#b1afad" /></Item></BigButton>
        </Group>
        <Group w={71} name="Editor" ls={-0.4}>
          <BigButton $w={74}><BigIcon><EditorIcon /></BigIcon><Label $ls={-0.4}>Editor</Label></BigButton>
        </Group>
        <Item $ml={82}><ToolRow $mt={94}><Svg w={14} h={8}><path d="M1 7 7 1.2 13 7" stroke="#444" strokeWidth="1.5" /></Svg></ToolRow></Item>
      </Ribbon>

      <Workspace>
        <Pages>
          <PageEnd />
          <Page>
            <CropRow><Crop $left /><Crop /></CropRow>
            <Heading>Addition Practice: <Caps>ANSWER KEY</Caps></Heading>
            <Answers>
              {answers.map((a, i) => <Answer key={i}>{`${i + 1}. ${a}`}</Answer>)}
            </Answers>
          </Page>
        </Pages>
        <Scrollbar>
          <ScrollButton><Svg w={10} h={6}><path d="M0 6 5 0 10 6Z" fill="#666" /></Svg></ScrollButton>
          <ScrollTrack><ScrollThumb /></ScrollTrack>
          <ScrollButton><Svg w={10} h={6}><path d="M0 0H10L5 6Z" fill="#666" /></Svg></ScrollButton>
        </Scrollbar>
        <RibbonShadow />
      </Workspace>

      <StatusBar>
        <Label $ml={10} $w={91} $size={13} $ls={0.02}>Page 2 of 2</Label>
        <Label $w={85} $size={13} $ls={-0.23}>146 words</Label>
        <ProofIcon />
        <Label $ml={22} $w={1040} $size={13} $ls={-0.22}>English (United States)</Label>
        <AddinIcon />
        <Label $ml={3} $w={190} $size={13} $ls={-0.18}>Add-ins loaded successfully</Label>
        <FocusIcon />
        <Label $ml={3} $w={64} $size={13} $ls={-0.35} $color="#333">Focus</Label>
        <ReadIcon />
        <ViewButton><PrintIcon /></ViewButton>
        <Item $ml={16}><WebIcon /></Item>
        <Item $ml={23}><Svg w={10} h={10}><path d="M0 5H10" stroke="#444" strokeWidth="1.2" /></Svg></Item>
        <ZoomTrack><ZoomThumb /></ZoomTrack>
        <Item $ml={7}><Svg w={10} h={10}><path d="M0 5H10M5 0V10" stroke="#444" strokeWidth="1.2" /></Svg></Item>
        <Label $ml={16} $size={13} $ls={-0.7}>100%</Label>
      </StatusBar>

      <Taskbar>
        <TaskSlot $w={60}><WindowsIcon /></TaskSlot>
        <TaskSearch><Lens w={21} color="#e6e6e6" sw={1.3} /><Label $ml={14} $size={18.4} $lh={26} $ls={-0.27}>Type here to search</Label></TaskSearch>
        <TaskSlot $w={60}><Svg w={20} h={20}><circle cx="10" cy="10" r="8.4" stroke="#fff" strokeWidth="2.4" /></Svg></TaskSlot>
        <TaskSlot $w={60}><TaskViewIcon /></TaskSlot>
        <TaskSlot $ml={3} $line={51}><EdgeIcon /></TaskSlot>
        <TaskSlot $line={51}><FolderIcon /></TaskSlot>
        <TaskSlot><MusicIcon /></TaskSlot>
        <TaskSlot $line={51}><DiscordIcon /></TaskSlot>
        <TaskSlot $line={51}><JavaIcon /></TaskSlot>
        <TaskSlot $ml={1} $w={61} $line={61} $active><WordIcon /></TaskSlot>
        <Item $ml={627}><Svg w={16} h={10}><path d="M1 9 8 1.6 15 9" stroke="#fff" strokeWidth="1.4" /></Svg></Item>
        <Item $ml={12}><BatteryIcon /></Item>
        <Item $ml={12}><WifiIcon /></Item>
        <Item $ml={10}><VolumeIcon /></Item>
        <Label $ml={12} $w={31} $ls={-0.84}>ENG</Label>
        <Clock><Label $ls={-0.7}>7:11 PM</Label><Label $ls={-0.45}>8/13/2020</Label></Clock>
        <Item $ml={21} $w={30}><NoticeIcon /></Item>
        <DesktopEdge />
      </Taskbar>
    </Window>
  );
}
